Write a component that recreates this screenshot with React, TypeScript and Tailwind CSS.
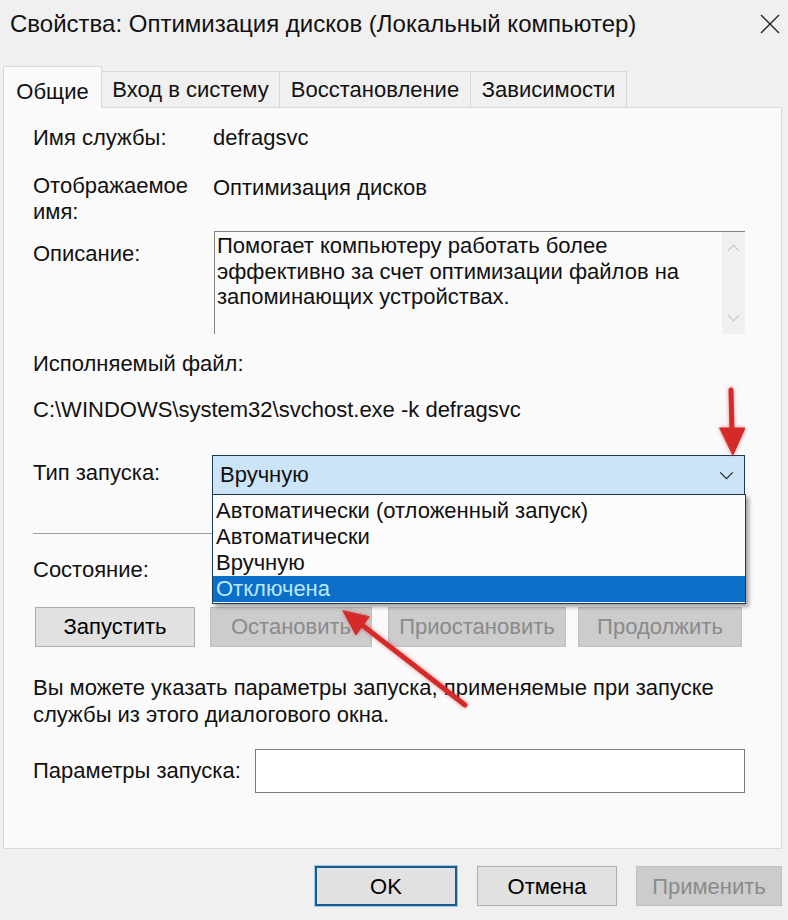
import React from 'react';

const ChevronDown: React.FC<{ className?: string }> = ({ className }) => (
  <svg viewBox="0 0 16 10" className={className} fill="none" stroke="currentColor" strokeWidth={1.4}>
    <path d="M1 1.5 L8 8.5 L15 1.5" />
  </svg>
);

const ChevronUp: React.FC<{ className?: string }> = ({ className }) => (
  <svg viewBox="0 0 16 10" className={className} fill="none" stroke="currentColor" strokeWidth={1.4}>
    <path d="M1 8.5 L8 1.5 L15 8.5" />
  </svg>
);

interface BtnProps {
  label: string;
  width: string;
  disabled?: boolean;
  primary?: boolean;
  className?: string;
}

const Btn: React.FC<BtnProps> = ({ label, width, disabled, primary, className = '' }) => {
  let look = 'bg-[#e1e1e1] border border-[#adadad] text-black';
  if (disabled) look = 'bg-[#cccccc] border border-[#bfbfbf] text-[#8a8a8a]';
  if (primary) look = 'bg-[#e1e1e1] border-2 border-[#1b5b8c] text-black shadow-[0_0_0_1px_#9cc9ee]';
  return (
    <div className={`${width} ${look} ${className} flex h-[40px] shrink-0 items-center justify-center text-[22px]`}>
      {label}
    </div>
  );
};

const options = [
  'Автоматически (отложенный запуск)',
  'Автоматически',
  'Вручную',
  'Отключена',
];

export default function App() {
  return (
    <div className="relative h-[920px] w-[788px] overflow-hidden bg-[#f0f0f0] font-['Liberation_Sans',Arial,sans-serif] text-[#111]">
      {/* title bar */}
      <div className="flex h-[46px] items-center justify-between pl-[10px] pr-[8px] pt-[2px]">
        <span className="text-[24px] leading-none">Свойства: Оптимизация дисков (Локальный компьютер)</span>
        <svg viewBox="0 0 20 20" className="h-[20px] w-[20px] text-[#222]" stroke="currentColor" strokeWidth={1.3}>
          <path d="M1 1 L19 19 M19 1 L1 19" />
        </svg>
      </div>

      {/* tabs */}
      <div className="mt-[20px] flex h-[41px] items-end pl-[3px]">
        <div className="relative z-10 -mb-px flex h-[42px] w-[99px] items-start justify-center border border-b-0 border-[#d9d9d9] bg-[#fafafa] pt-[8px] text-[22px]">
          Общие
        </div>
        <div className="flex h-[36px] w-[178px] items-center justify-center border border-l-0 border-b-0 border-[#d9d9d9] bg-[#f0f0f0] text-[22px]">
          Вход в систему
        </div>
        <div className="flex h-[36px] w-[191px] items-center justify-center border border-l-0 border-b-0 border-[#d9d9d9] bg-[#f0f0f0] text-[22px]">
          Восстановление
        </div>
        <div className="flex h-[36px] w-[156px] items-center justify-center border border-l-0 border-b-0 border-[#d9d9d9] bg-[#f0f0f0] text-[22px]">
          Зависимости
        </div>
      </div>

      {/* tab panel */}
      <div className="ml-[3px] mr-[6px] flex h-[742px] flex-col border border-[#d9d9d9] bg-[#fafafa] pl-[29px] pr-[36px] text-[22px] leading-[26px]">
        <div className="mt-[17px] flex">
          <div className="w-[180px] shrink-0">Имя службы:</div>
          <div>defragsvc</div>
        </div>

        <div className="mt-[22px] flex">
          <div className="w-[180px] shrink-0">
            Отображаемое
            <br />
            имя:
          </div>
          <div className="pt-[2px]">Оптимизация дисков</div>
        </div>

        <div className="mt-[6px] flex">
          <div className="w-[181px] shrink-0 pt-[10px]">Описание:</div>
          <div className="flex h-[103px] flex-1 border-t border-l border-[#828282] bg-[#fafafa]">
            <div className="flex-1 pl-[2px] pt-[1px] leading-[25.5px]">
              Помогает компьютеру работать более
              <br />
              эффективно за счет оптимизации файлов на
              <br />
              запоминающих устройствах.
            </div>
            <div className="flex w-[23px] flex-col items-center justify-between bg-[#f0f0f0] py-[12px] text-[#c2c2c2]">
              <ChevronUp className="h-[8px] w-[13px]" />
              <ChevronDown className="h-[8px] w-[13px]" />
            </div>
          </div>
        </div>

        <div className="mt-[17px]">Исполняемый файл:</div>
        <div className="mt-[20px]">C:\WINDOWS\system32\svchost.exe -k defragsvc</div>

        <div className="mt-[32px] flex">
          <div className="w-[179px] shrink-0 pt-[5px]">Тип запуска:</div>
          <div className="relative flex-1">
            <div className="flex h-[40px] items-center justify-between border border-[#1d3b57] bg-[#cce4f7] pl-[7px] pr-[10px]">
              <span>Вручную</span>
              <ChevronDown className="h-[9px] w-[15px] text-[#1d2a36]" />
            </div>
            <div className="absolute left-0 right-[-1px] top-full z-20 -mt-px h-[110px] border border-[#1d3b57] bg-[#fcfcfc] pt-[3px] shadow-[3px_3px_4px_rgba(0,0,0,0.35)]">
              {options.map((o, i) => (
                <div
                  key={o}
                  className={`h-[26px] pl-[3px] leading-[26px] ${i === 3 ? 'bg-[#0b6fc9] text-[#bde8ff]' : ''}`}
                >
                  {o}
                </div>
              ))}
            </div>
          </div>
        </div>

        <div className="mt-[38px] h-px bg-[#a0a0a0]" />

        <div className="mt-[23px]">Состояние:</div>

        <div className="mt-[24px] flex">
          <Btn label="Запустить" width="w-[160px]" className="ml-[2px]" />
          <Btn label="Остановить" width="w-[162px]" disabled className="ml-[15px]" />
          <Btn label="Приостановить" width="w-[178px]" disabled className="ml-[16px]" />
          <Btn label="Продолжить" width="w-[164px]" disabled className="ml-[12px]" />
        </div>

        <div className="mt-[27px] leading-[27px]">
          Вы можете указать параметры запуска, применяемые при запуске
          <br />
          службы из этого диалогового окна.
        </div>

        <div className="mt-[21px] flex items-center">
          <div className="w-[222px] shrink-0">Параметры запуска:</div>
          <div className="h-[44px] flex-1 border border-[#7a7a7a] bg-white" />
        </div>
      </div>

      {/* footer buttons */}
      <div className="mt-[17px] flex pl-[315px]">
        <Btn label="OK" width="w-[142px]" primary />
        <Btn label="Отмена" width="w-[140px]" className="ml-[20px]" />
        <Btn label="Применить" width="w-[146px]" disabled className="ml-[19px]" />
      </div>

      {/* red annotation arrows */}
      <svg className="pointer-events-none absolute inset-0 z-30" width="788" height="920" viewBox="0 0 788 920">
        <g fill="#d42a2a" stroke="#d42a2a" strokeLinecap="round" style={{ filter: 'drop-shadow(0 0 2px rgba(200,40,40,0.5))' }}>
          <line x1="731" y1="390" x2="732" y2="432" strokeWidth={5} />
          <polygon points="720,428 745,428 733,455" strokeWidth={1} />
          <line x1="465" y1="705" x2="362" y2="625" strokeWidth={5} />
          <polygon points="369,617 356,635 343,611" strokeWidth={1} />
        </g>
      </svg>
    </div>
  );
}
